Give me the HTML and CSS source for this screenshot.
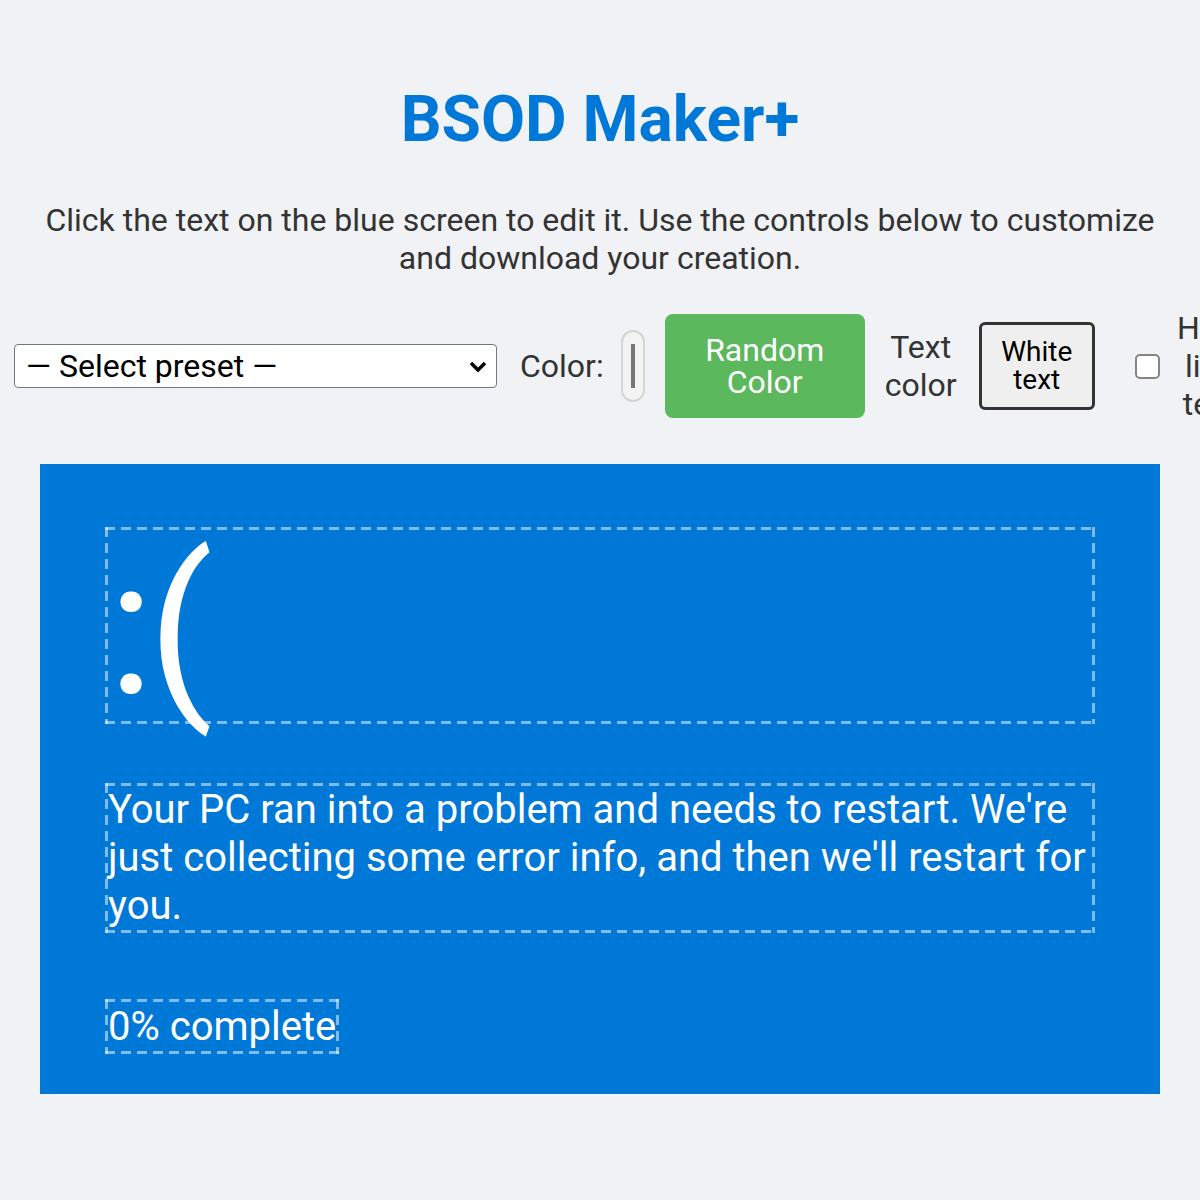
FILE: index.html
```html
<!DOCTYPE html>
<html lang="en">
<head>
    <meta charset="UTF-8">
    <meta name="viewport" content="width=device-width, initial-scale=1.0">
    <title>BSOD Maker+</title>
    <link rel="stylesheet" href="styles.css">
</head>
<body>
    <div class="container">
        <h1>BSOD Maker+</h1>
        <p class="intro">Click the text on the blue screen to edit it. Use the controls below to customize and download your creation.</p>

        <div class="controls">
            <span class="select-wrap">
                <select class="preset">
                    <option>— Select preset —</option>
                    <option>Windows 10</option>
                    <option>Windows 11</option>
                    <option>Windows XP</option>
                </select>
                <svg class="chevron" width="18" height="12" viewBox="0 0 18 12"><path d="M2 2 L9 9 L16 2" fill="none" stroke="#000" stroke-width="3.4"/></svg>
            </span>
            <label class="ctl-label color-label">Color:</label>
            <span class="swatch" title="Background color"></span>
            <button class="btn btn-random">Random Color</button>
            <span class="ctl-label ctl-stack">Text color</span>
            <button class="btn btn-text">White text</button>
            <label class="check">
                <input type="checkbox">
                <span class="ctl-stack check-text">Hide link text</span>
            </label>
        </div>

        <div class="screen">
            <div class="editable face" contenteditable="true">:(</div>
            <div class="editable message" contenteditable="true">Your PC ran into a problem and needs to restart. We're just collecting some error info, and then we'll restart for you.</div>
            <div class="editable progress" contenteditable="true">0% complete</div>
        </div>
    </div>
</body>
</html>
```

FILE: styles.css
```css
:root {
    --bg: #f0f2f5;
    --blue: #0078d7;
    --green: #5cb85c;
    --text: #333;
    --dash: rgba(255,255,255,0.5);
}
html, body {
    margin: 0; padding: 0;
}
body {
    background: var(--bg);
    font-family: Roboto, 'Liberation Sans', Arial, sans-serif;
    color: var(--text);
    overflow-x: hidden;
}
.container {
    max-width: 1120px;
    margin: 0 auto;
    padding: 0 40px;
}
h1 {
    margin: 81px 0 0;
    font-size: 64px;
    line-height: 77px;
    font-weight: 700;
    color: var(--blue);
    text-align: center;
}
.intro {
    margin: 43px 0 0;
    font-size: 32px;
    line-height: 38px;
    text-align: center;
}

/* toolbar */
.controls {
    display: flex;
    align-items: center;
    gap: 20px;
    margin: 32px 0 0 -26px;
    width: 1300px;
    font-size: 32px;
}
.select-wrap {
    position: relative;
    flex-shrink: 0;
    display: flex;
}
.preset {
    appearance: none;
    -webkit-appearance: none;
    width: 483px;
    height: 44px;
    font-family: inherit;
    font-size: 32px;
    color: #000;
    background: #fff;
    border: 1.5px solid #767676;
    border-radius: 4px;
    padding: 0 0 0 11px;
}
.chevron {
    position: absolute;
    right: 10px;
    top: 17px;
    pointer-events: none;
}
.ctl-label {
    color: var(--text);
    flex-shrink: 0;
}
.color-label {
    margin: 0 -3px 0 3px;
}
.ctl-stack {
    display: block;
    text-align: center;
    line-height: 38px;
    width: 72px;
}
.swatch {
    position: relative;
    width: 20px;
    height: 68px;
    border: 2px solid #d4d4d4;
    border-radius: 12px;
    background: #f3f3f3;
    flex-shrink: 0;
}
.swatch::before {
    content: '';
    position: absolute;
    left: 8px; top: 12px;
    width: 4px; height: 44px;
    background: #767676;
}
.btn {
    font-family: inherit;
    cursor: pointer;
    flex-shrink: 0;
}
.btn-random {
    width: 200px;
    height: 104px;
    background: var(--green);
    color: #fff;
    border: none;
    border-radius: 8px;
    font-size: 32px;
    line-height: 32px;
    padding: 0 30px;
}
.btn-text {
    width: 116px;
    height: 88px;
    background: #efefef;
    color: #000;
    border: 3px solid #333;
    border-radius: 6px;
    font-size: 28px;
    line-height: 28px;
    padding: 0 10px;
    margin-left: 2px;
}
.check {
    display: flex;
    align-items: center;
    gap: 15px;
    margin-left: 20px;
}
.check input {
    appearance: none;
    -webkit-appearance: none;
    width: 25px; height: 25px;
    margin: 0;
    border: 2px solid #858585;
    border-radius: 5px;
    background: #fff;
}
.check-text {
    width: 70px;
}

/* the blue screen */
.screen {
    margin-top: 41px;
    background: var(--blue);
    color: #fff;
    padding: 63px 65px 40px;
}
/* long dashes drawn with gradients, the native dashed border is too fine */
.editable {
    padding: 3px;
    outline: none;
    background:
        repeating-linear-gradient(90deg, var(--dash) 0 10px, transparent 10px 16px) top / 100% 3px no-repeat,
        repeating-linear-gradient(90deg, var(--dash) 0 10px, transparent 10px 16px) bottom / 100% 3px no-repeat,
        repeating-linear-gradient(180deg, var(--dash) 0 10px, transparent 10px 16px) left / 3px 100% no-repeat,
        repeating-linear-gradient(180deg, var(--dash) 0 10px, transparent 10px 16px) right / 3px 100% no-repeat;
}
.face {
    height: 191px;
    font-size: 190px;
    line-height: 197px;
    letter-spacing: -6px;
    overflow: visible;
}
.message {
    margin-top: 59px;
    font-size: 40px;
    line-height: 48px;
}
.progress {
    display: inline-block;
    margin-top: 66px;
    font-size: 40px;
    line-height: 49px;
}
```
